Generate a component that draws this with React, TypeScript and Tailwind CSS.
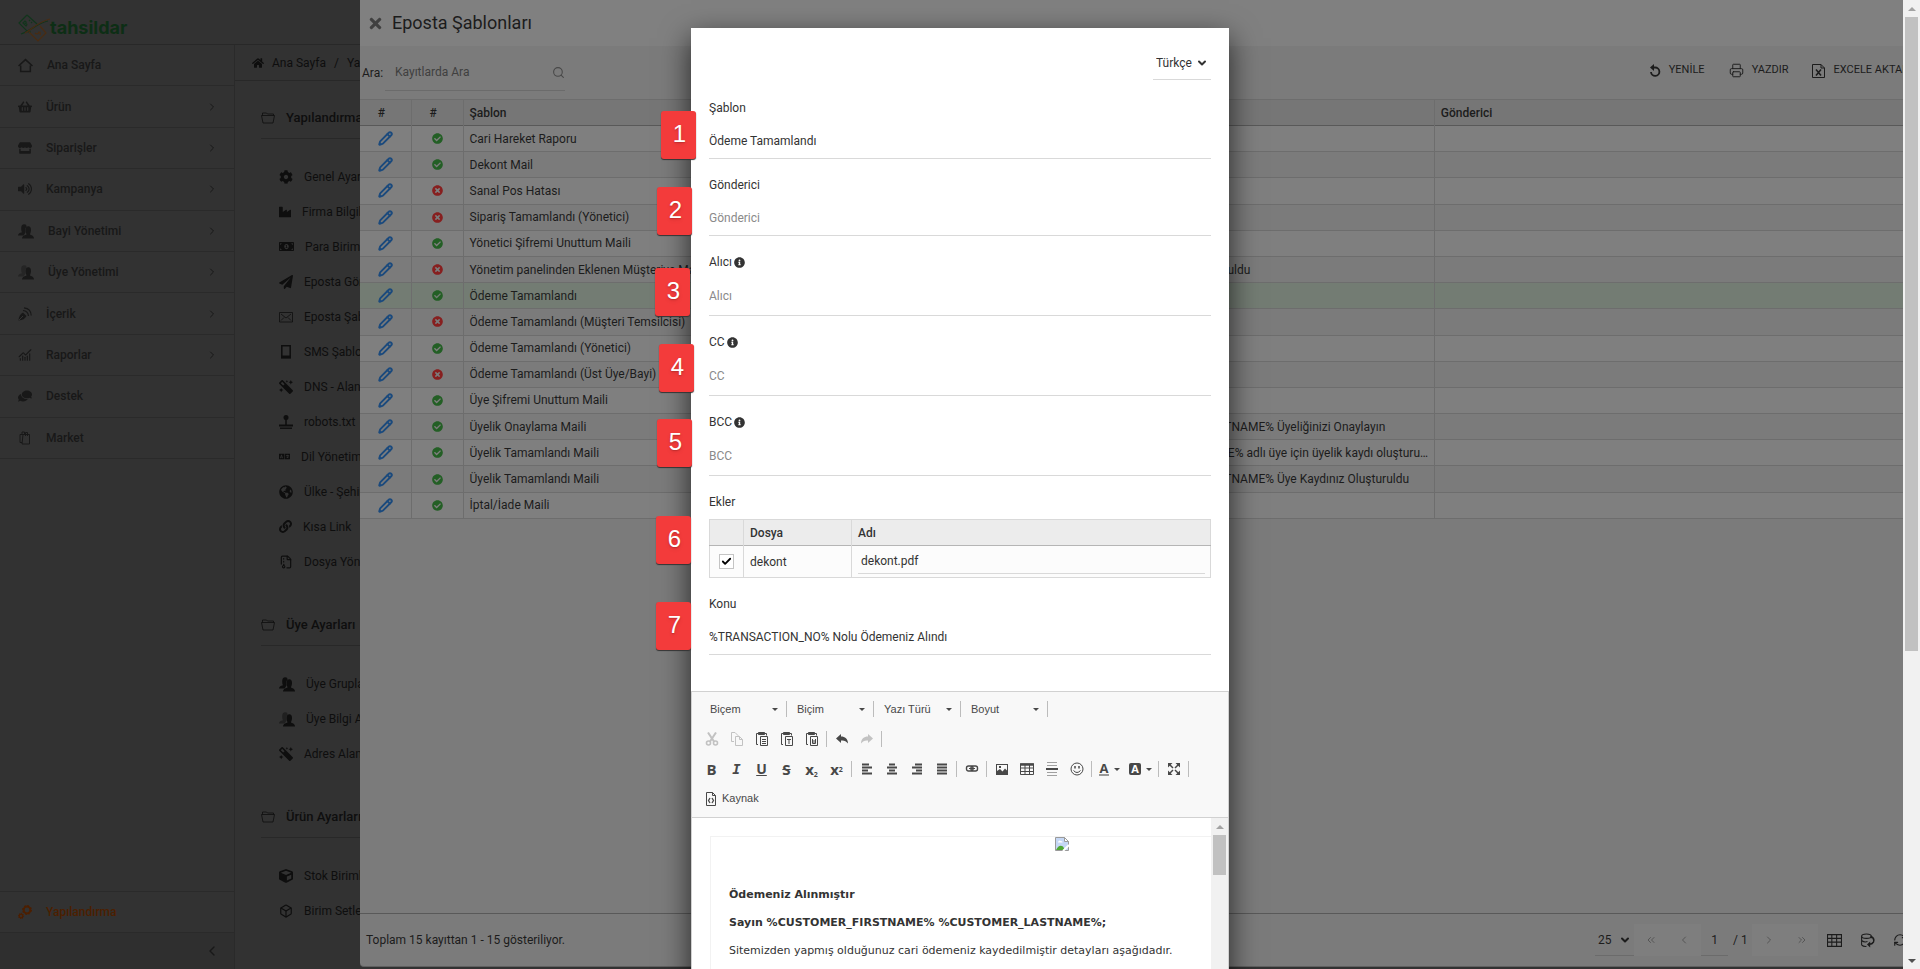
import type { ReactNode } from 'react'
import {
  FaCheckCircle,
  FaCog,
  FaComments,
  FaCube,
  FaGlobeAmericas,
  FaHome,
  FaIndustry,
  FaInfoCircle,
  FaLanguage,
  FaLink,
  FaMagic,
  FaMoneyBillAlt,
  FaPaperPlane,
  FaShoppingBasket,
  FaStore,
  FaTimes,
  FaTimesCircle,
  FaVolumeUp,
} from 'react-icons/fa'
import {
  Box,
  ChartNoAxesCombined,
  Check,
  ChevronDown,
  ChevronLeft,
  ChevronRight,
  ChevronsLeft,
  ChevronsRight,
  FileArchive,
  Pencil,
  Printer,
  RefreshCw,
  Search,
} from 'lucide-react'

const Svg = ({ children, size = 14 }: { children: ReactNode; size?: number }) => {
  return (
    <svg width={size} height={size} viewBox="0 0 14 14" fill="none" stroke="currentColor">
      {children}
    </svg>
  )
}

const HomeIcon = () => (
  <Svg size={15}>
    <path d="M0.5 7.5 L7 1.5 L13.5 7.5 M2.5 7 V12.5 H11.5 V7" strokeWidth="1.4" />
  </Svg>
)

const UsersIcon = ({ soft }: { soft?: boolean }) => (
  <Svg size={16}>
    <g fill="currentColor" stroke="none">
      <path d="M0 11 Q0 9 3.5 8.2 Q2.8 7 2.8 4.5 Q2.8 1 5.5 1 Q7.5 1 7.6 3 Q5.8 4.5 6.6 8 L5 11 Z" opacity={soft ? 0.5 : 1} />
      <path d="M3.5 13.5 Q3.5 11 7.5 10 Q6.6 8.5 6.6 6.2 Q6.6 2.8 9 2.8 Q11.4 2.8 11.4 6.2 Q11.4 8.5 10.4 10 Q14 11 14 13.5 Z" />
    </g>
  </Svg>
)

const ContentIcon = () => (
  <Svg>
    <path d="M0.5 13.5 Q1 7.5 5 5.5 L8.5 9 Q6.5 13 0.5 13.5 Z" fill="currentColor" stroke="none" />
    <path d="M5 3.5 Q10 4 10.5 9 M6 0.8 Q13 1.5 13.2 8.5" strokeWidth="1.2" />
    <path d="M1 13 L5 9" stroke="#323232" />
  </Svg>
)

const MarketIcon = () => (
  <Svg>
    <path d="M5 3.5 H11.5 V13 H4 Z M5 3.5 H2 V11.5 H4" />
    <path d="M4 3 V1 H6.5 V3 M7.5 5 V1.5 H9.5 V5" />
  </Svg>
)

const GearsIcon = () => (
  <Svg>
    <circle cx="9" cy="5" r="3.4" strokeWidth="2" />
    <circle cx="9" cy="5" r="4.5" strokeDasharray="1.8 1.7" />
    <circle cx="3" cy="11" r="1.8" strokeWidth="1.4" />
    <circle cx="3" cy="11" r="2.6" strokeDasharray="1 1" />
  </Svg>
)

const FolderIcon = () => (
  <Svg>
    <path d="M1.5 4.5 V2 H5.5 L6.5 3 H12.5 V4.5 M0.5 4.5 H13.5 L12 12 H2 Z" strokeWidth="0.8" />
  </Svg>
)

const MailIcon = () => (
  <Svg>
    <path d="M0.5 2.5 H13.5 V12 H0.5 Z M2 4 L7 8 L12 4 M2 10.5 L5 7.5 M12 10.5 L9 7.5" strokeWidth="0.8" />
  </Svg>
)

const TabletIcon = () => (
  <Svg>
    <path d="M2.8 0.8 H11.2 V12.5 H2.8 Z" strokeWidth="1.5" />
    <path d="M2 12 H12" strokeWidth="3" />
  </Svg>
)

const JoystickIcon = () => (
  <Svg>
    <circle cx="7" cy="2.5" r="2.5" fill="currentColor" stroke="none" />
    <path d="M7 4 V10" strokeWidth="1.6" />
    <path d="M0 10.5 H14" strokeWidth="2" />
    <path d="M1 13.2 H13" strokeWidth="1.4" />
  </Svg>
)

const menu = [
  { label: 'Ana Sayfa', icon: <HomeIcon />, arrow: false },
  { label: 'Ürün', icon: <FaShoppingBasket size={14} />, arrow: true },
  { label: 'Siparişler', icon: <FaStore size={14} />, arrow: true },
  { label: 'Kampanya', icon: <FaVolumeUp size={14} />, arrow: true },
  { label: 'Bayi Yönetimi', icon: <UsersIcon />, arrow: true },
  { label: 'Üye Yönetimi', icon: <UsersIcon soft />, arrow: true },
  { label: 'İçerik', icon: <ContentIcon />, arrow: true },
  { label: 'Raporlar', icon: <ChartNoAxesCombined size={14} />, arrow: true },
  { label: 'Destek', icon: <FaComments size={14} className="-scale-x-100" />, arrow: false },
  { label: 'Market', icon: <MarketIcon />, arrow: false },
]

const sections = [
  {
    title: 'Yapılandırma',
    items: [
      { label: 'Genel Ayarlar', icon: <FaCog size={14} /> },
      { label: 'Firma Bilgileri', icon: <FaIndustry size={12} /> },
      { label: 'Para Birimleri', icon: <FaMoneyBillAlt size={15} /> },
      { label: 'Eposta Gönderimi', icon: <FaPaperPlane size={14} /> },
      { label: 'Eposta Şablonları', icon: <MailIcon /> },
      { label: 'SMS Şablonları', icon: <TabletIcon /> },
      { label: 'DNS - Alan Adı', icon: <FaMagic size={14} className="-scale-x-100" /> },
      { label: 'robots.txt', icon: <JoystickIcon /> },
      { label: 'Dil Yönetimi', icon: <FaLanguage size={11} /> },
      { label: 'Ülke - Şehir', icon: <FaGlobeAmericas size={14} /> },
      { label: 'Kısa Link', icon: <FaLink size={13} /> },
      { label: 'Dosya Yönetimi', icon: <FileArchive size={14} /> },
    ],
  },
  {
    title: 'Üye Ayarları',
    items: [
      { label: 'Üye Grupları', icon: <UsersIcon /> },
      { label: 'Üye Bilgi Alanları', icon: <UsersIcon soft /> },
      { label: 'Adres Alanları', icon: <FaMagic size={14} className="-scale-x-100" /> },
    ],
  },
  {
    title: 'Ürün Ayarları',
    items: [
      { label: 'Stok Birimleri', icon: <FaCube size={14} /> },
      { label: 'Birim Setleri', icon: <Box size={14} /> },
    ],
  },
]

const templates = [
  { name: 'Cari Hareket Raporu', active: true, subject: '' },
  { name: 'Dekont Mail', active: true, subject: '' },
  { name: 'Sanal Pos Hatası', active: false, subject: '' },
  { name: 'Sipariş Tamamlandı (Yönetici)', active: false, subject: '' },
  { name: 'Yönetici Şifremi Unuttum Maili', active: true, subject: '' },
  { name: 'Yönetim panelinden Eklenen Müşteriye Mail', active: false, subject: 'Sayın %CUSTOMER_FIRSTNAME% Kaydınız Oluşturuldu' },
  { name: 'Ödeme Tamamlandı', active: true, subject: '', selected: true },
  { name: 'Ödeme Tamamlandı (Müşteri Temsilcisi)', active: false, subject: '' },
  { name: 'Ödeme Tamamlandı (Yönetici)', active: true, subject: '' },
  { name: 'Ödeme Tamamlandı (Üst Üye/Bayi)', active: false, subject: '' },
  { name: 'Üye Şifremi Unuttum Maili', active: true, subject: '' },
  { name: 'Üyelik Onaylama Maili', active: true, subject: 'Sn %CUSTOMER_FIRSTNAME% %CUSTOMER_LASTNAME% Üyeliğinizi Onaylayın' },
  { name: 'Üyelik Tamamlandı Maili', active: true, subject: '%CUSTOMERFIRSTNAME%%CUSTOMERLASTNAME% adlı üye için üyelik kaydı oluşturuldu' },
  { name: 'Üyelik Tamamlandı Maili', active: true, subject: 'Sn %CUSTOMER_FIRSTNAME% %CUSTOMER_LASTNAME% Üye Kaydınız Oluşturuldu' },
  { name: 'İptal/İade Maili', active: true, subject: '' },
]

export default function App() {
  return (
    <div className="relative h-screen overflow-hidden bg-[#323232] font-[Roboto,sans-serif] text-xs text-[#1c1c1c]">
      <Backdrop />
      <Drawer />
      <div className="absolute inset-0 flex items-start justify-center overflow-hidden pt-7">
        <TemplateForm />
      </div>
      <PageScrollbar />
    </div>
  )
}

const Backdrop = () => {
  return (
    <div className="flex h-full flex-col">
      <header className="flex h-[45px] shrink-0 items-end border-b border-[#282828] pb-0.5 pl-[18px]">
        <Logo />
      </header>
      <div className="flex min-h-0 flex-1">
        <Sidebar />
        <main className="flex-1 text-[#0e0e0e]">
          <nav className="flex h-9 items-center border-b border-[#282828] pl-[17px]">
            <FaHome size={12} />
            <a href="#" className="ml-2">Ana Sayfa</a>
            <span className="mx-2">/</span>
            <a href="#">Yapılandırma</a>
          </nav>
          <div className="flex flex-col gap-[26px] pl-[26px] pt-[17px]">
            {sections.map((section) => (
              <section key={section.title}>
                <h2 className="mb-5 flex h-[41px] items-center gap-[11px] border-b border-[#282828] text-[13px] font-medium">
                  <FolderIcon />
                  {section.title}
                </h2>
                <ul className="pl-[18px]">
                  {section.items.map((item) => (
                    <li key={item.label} className="flex h-[35px] items-center">
                      <a href="#" className="flex items-center gap-[11px]">{item.icon}{item.label}</a>
                    </li>
                  ))}
                </ul>
              </section>
            ))}
          </div>
        </main>
      </div>
    </div>
  )
}

const Logo = () => {
  return (
    <a href="#" className="flex items-center">
      <svg width="32" height="28" viewBox="0 0 32 28" fill="none" strokeWidth="1.2">
        <path d="M9 1 L19 10 M13 18 L10 18 L1 9 L9 1" stroke="#12351c" />
        <path d="M5 9 L7 7 Q9 8 7.5 9.5 Q10 10 8 12 Z M11 6 L12 7 M13 8 L14 9" stroke="#12351c" />
        <path d="M11 18 L20 27 L28 19 L22 12" stroke="#4a2c12" />
        <path d="M17 19 Q20 21 21 18 Q23 18 22 21" stroke="#4a2c12" />
        <path d="M3 20 C12 17 20 9 30 7" stroke="#12351c" />
        <path d="M7 19 C14 15 20 8 32 5" stroke="#4a2c12" />
      </svg>
      <span className="font-[Inter,sans-serif] text-lg leading-6 font-bold text-[#0d2e15]">tahsildar</span>
    </a>
  )
}

const Sidebar = () => {
  return (
    <aside className="flex w-[235px] shrink-0 flex-col border-r border-[#2a2a2a] font-medium text-[#181818]">
      <ul className="grid h-[414px] grid-rows-10">
        {menu.map((item) => (
          <li key={item.label} className="flex items-center border-b border-[#2a2a2a] pr-4 pl-[18px]">
            <a href="#" className="flex flex-1 items-center gap-3.5">{item.icon}{item.label}</a>
            {item.arrow && <ChevronRight size={12} />}
          </li>
        ))}
      </ul>
      <a href="#" className="mt-auto flex h-[42px] items-center gap-3.5 border-y border-[#2a2a2a] pl-[18px] text-[#4d1f00]">
        <GearsIcon />
        Yapılandırma
      </a>
      <button type="button" className="flex h-9 items-center justify-end bg-[#2f2f2f] pr-3.5" aria-label="Menüyü daralt">
        <ChevronLeft size={16} />
      </button>
    </aside>
  )
}

const Drawer = () => {
  return (
    <section className="absolute top-0 right-0 bottom-0.5 left-[360px] flex flex-col rounded-b border-b border-[#606060] bg-[#7b7b7b]">
      <header className="flex h-[46px] shrink-0 items-center gap-2 bg-[#808080] pl-[7px]">
        <button type="button" aria-label="Kapat" className="text-[#404040]"><FaTimes size={17} /></button>
        <h1 className="text-lg">Eposta Şablonları</h1>
      </header>
      <div className="flex h-[53px] shrink-0 items-center justify-between pr-[11px] pl-0.5">
        <div className="flex items-center">
          <label htmlFor="search" className="w-[23px]">Ara:</label>
          <div className="flex h-9 w-[180px] items-center border-b border-[#6b6b6b]">
            <input id="search" placeholder="Kayıtlarda Ara" className="w-full pl-2.5 placeholder:text-[#404040]" />
            <Search size={13} className="shrink-0 text-[#484848]" />
          </div>
        </div>
        <div className="flex gap-6 pb-1 text-[11px]">
          <button type="button" className="flex items-center gap-2"><UndoIcon />YENİLE</button>
          <button type="button" className="flex items-center gap-2"><Printer size={15} strokeWidth={1.5} />YAZDIR</button>
          <button type="button" className="flex items-center gap-2"><ExcelIcon />EXCELE AKTAR</button>
        </div>
      </div>
      <table className="h-[420px] w-full table-fixed border-collapse">
        <colgroup>
          <col className="w-[51px]" />
          <col className="w-[52px]" />
          <col />
          <col />
          <col />
        </colgroup>
        <thead>
          <tr className="h-[26px] border-t border-b border-t-[#6d6d6d] border-b-[#595959] bg-[#767676] text-left">
            <th className="border-r border-[#6d6d6d] pr-2 text-center font-medium">#</th>
            <th className="border-r border-[#6d6d6d] pr-2 text-center font-medium">#</th>
            <th className="border-r border-[#6d6d6d] px-1.5 font-medium">Şablon</th>
            <th className="border-r border-[#6d6d6d] px-1.5 font-medium">Konu</th>
            <th className="px-1.5 font-medium">Gönderici</th>
          </tr>
        </thead>
        <tbody>
          {templates.map((row, i) => (
            <tr key={i} className={row.selected ? 'h-[26px] bg-[#737c73]' : 'h-[26px] odd:bg-[#7f7f7f] even:bg-[#7b7b7b]'}>
              <td className="border-r border-b border-[#6d6d6d]">
                <button type="button" aria-label="Düzenle" className="flex w-full justify-center text-[#1b4a7d]"><Pencil size={15} strokeWidth={3} /></button>
              </td>
              <td className="border-r border-b border-[#6d6d6d]">
                <div className="flex justify-center">
                  {row.active ? <FaCheckCircle size={11} className="text-[#235f25]" /> : <FaTimesCircle size={11} className="text-[#871f1f]" />}
                </div>
              </td>
              <td className="truncate border-r border-b border-[#6d6d6d] px-1.5">{row.name}</td>
              <td className="truncate border-r border-b border-[#6d6d6d] pl-1.5 pr-1">{row.subject}</td>
              <td className="border-b border-[#6d6d6d]" />
            </tr>
          ))}
        </tbody>
      </table>
      <footer className="mt-auto flex h-[53px] items-center border-t border-[#595959] pr-[13px] pl-1.5">
        <p className="flex-1">Toplam 15 kayıttan 1 - 15 gösteriliyor.</p>
        <div className="relative flex h-8 w-[39px] items-center border-b border-[#6b6b6b]">
          <select aria-label="Sayfa boyutu" className="w-full appearance-none pl-[3px]"><option>25</option></select>
          <ChevronDown size={12} strokeWidth={4} className="pointer-events-none absolute right-[3px]" />
        </div>
        <div className="flex h-8 w-[67px] items-center justify-around bg-[#7e7e7e] text-[#555]">
          <button type="button" aria-label="İlk"><ChevronsLeft size={12} /></button>
          <button type="button" aria-label="Önceki"><ChevronLeft size={12} /></button>
        </div>
        <input aria-label="Sayfa" defaultValue="1" className="h-8 w-[27px] border-b border-[#6b6b6b] text-center" />
        <span className="w-6 pl-[5px]">/ 1</span>
        <div className="flex h-8 w-[66px] items-center justify-around bg-[#7e7e7e] text-[#555]">
          <button type="button" aria-label="Sonraki"><ChevronRight size={12} /></button>
          <button type="button" aria-label="Son"><ChevronsRight size={12} /></button>
        </div>
        <div className="flex gap-[18px] pl-[9px]">
          <button type="button" aria-label="Sütunlar">
            <Svg size={15}><path d="M0.5 1.5 H13.5 V12.5 H0.5 Z M0.5 5 H13.5 M0.5 8.5 H13.5 M4.5 1.5 V12.5 M9 1.5 V12.5" /></Svg>
          </button>
          <button type="button" aria-label="Veri">
            <Svg size={15}>
              <ellipse cx="6" cy="3" rx="4.5" ry="2" />
              <path d="M1.5 3 V11 Q3 12.8 6 12.5 M1.5 7 Q4 9 7 8 M10.5 3 V5" />
              <path d="M10 3 Q14 5 12.5 8.5 Q11.5 10.5 8.5 10.5" strokeWidth="1.4" />
              <path d="M9.5 8 V13.5 L6.5 10.7 Z" fill="currentColor" stroke="none" />
            </Svg>
          </button>
          <button type="button" aria-label="Yenile"><RefreshCw size={14} /></button>
        </div>
      </footer>
    </section>
  )
}

const UndoIcon = () => {
  return (
    <svg width="12" height="14" viewBox="0 0 12 14" fill="none" stroke="currentColor" strokeWidth="1.8">
      <path d="M4 3.5 H6 A4.2 4.2 0 1 1 2 8" />
      <path d="M5 0 V7 L1 3.5 Z" fill="currentColor" stroke="none" />
    </svg>
  )
}

const ExcelIcon = () => {
  return (
    <svg width="13" height="14" viewBox="0 0 13 14" fill="none" stroke="currentColor">
      <path d="M0.5 0.5 H9 L12.5 4 V13.5 H0.5 Z M9 0.5 V4 H12.5" />
      <path d="M4 5.5 L9 11.5 M9 5.5 L4 11.5" strokeWidth="1.5" />
    </svg>
  )
}

const Field = ({ id, label, value, placeholder, info, tall, badge }: { id: string; label: string; value?: string; placeholder?: string; info?: boolean; tall?: boolean; badge: ReactNode }) => {
  return (
    <div className="relative">
      {badge}
      <label htmlFor={id} className="flex h-5 items-center gap-0.5">
        {label}
        {info && <FaInfoCircle size={11} />}
      </label>
      <input
        id={id}
        defaultValue={value}
        placeholder={placeholder}
        className={`mt-1 block w-full border-b border-[#d9d9d9] placeholder:text-[#8a8a8a] ${tall ? 'h-10' : 'h-[37px] pt-0.5'}`}
      />
    </div>
  )
}

const Badge = ({ n, place }: { n: number; place: string }) => {
  return (
    <span className={`absolute flex h-12 w-[35px] items-center justify-center rounded-[3px] bg-[#f33b3b] pb-0.5 pl-0.5 font-['Liberation_Sans',sans-serif] text-2xl text-white shadow-[0_1px_1px_#333] text-shadow-md ${place}`}>
      {n}
    </span>
  )
}

const TemplateForm = () => {
  return (
    <form className="w-[538px] shrink-0 bg-white text-[#333] shadow-[0_10px_28px_rgba(0,0,0,0.7)]">
      <div className="flex flex-col gap-4 px-[18px] pt-[18px] pb-9">
        <div className="relative mb-0.5 flex h-[34px] w-[58px] items-center self-end border-b border-[#d9d9d9]">
          <select aria-label="Dil" className="w-full appearance-none pl-[3px]"><option>Türkçe</option></select>
          <ChevronDown size={12} strokeWidth={4} className="pointer-events-none absolute right-[3px]" />
        </div>
        <Field id="template" label="Şablon" value="Ödeme Tamamlandı" badge={<Badge n={1} place="top-[13px] -left-12" />} />
        <Field id="sender" label="Gönderici" placeholder="Gönderici" badge={<Badge n={2} place="top-3 -left-[52px]" />} />
        <Field id="to" label="Alıcı" placeholder="Alıcı" info tall badge={<Badge n={3} place="top-4 -left-[54px]" />} />
        <Field id="cc" label="CC" placeholder="CC" info tall badge={<Badge n={4} place="top-3 -left-[50px]" />} />
        <Field id="bcc" label="BCC" placeholder="BCC" info tall badge={<Badge n={5} place="top-[7px] -left-[52px]" />} />
        <div className="relative">
          <Badge n={6} place="top-6 -left-[53px]" />
          <h3 className="flex h-5 items-center">Ekler</h3>
          <table className="mt-[7px] w-full table-fixed border-collapse border border-[#d9d9d9]">
            <thead>
              <tr className="h-[26px] border-b border-[#b5b5b5] bg-[#ececec] text-left">
                <th className="w-[34px] border-r border-[#d9d9d9]" />
                <th className="w-[108px] border-r border-[#d9d9d9] px-1.5 font-medium">Dosya</th>
                <th className="px-1.5 font-medium">Adı</th>
              </tr>
            </thead>
            <tbody>
              <tr className="h-8 bg-[#fcfcfc]">
                <td className="border-r border-[#d9d9d9]">
                  <label className="relative mx-auto flex size-[15px] items-center justify-center">
                    <input type="checkbox" defaultChecked aria-label="dekont" className="size-[15px] appearance-none border border-[#c4c4c4] bg-white" />
                    <Check size={11} strokeWidth={4} className="pointer-events-none absolute text-black" />
                  </label>
                </td>
                <td className="border-r border-[#d9d9d9] px-1.5">dekont</td>
                <td className="pr-[5px] pl-1.5">
                  <input aria-label="Adı" defaultValue="dekont.pdf" className="block h-6 w-full border-b border-[#d9d9d9] pl-[3px]" />
                </td>
              </tr>
            </tbody>
          </table>
        </div>
        <Field id="subject" label="Konu" value="%TRANSACTION_NO% Nolu Ödemeniz Alındı" badge={<Badge n={7} place="top-2 -left-[53px]" />} />
      </div>
      <Editor />
    </form>
  )
}

const Tool = ({ label, faded, wide, children }: { label: string; faded?: boolean; wide?: boolean; children: ReactNode }) => {
  return (
    <button type="button" aria-label={label} className={`flex h-6 items-center justify-center gap-[5px] ${wide ? 'w-[31px]' : 'w-[25px]'} ${faded ? 'opacity-30' : ''}`}>
      {children}
    </button>
  )
}

const Sep = () => <span className="mx-0.5 h-4 w-px bg-[#bcbcbc]" />

const Caret = () => <span className="border-x-[3px] border-t-[3px] border-x-transparent border-t-[#484848]" />

const Clipboard = ({ children }: { children: ReactNode }) => {
  return (
    <Svg>
      <path d="M3 12.5 H1.5 V1.5 H3 M10 1.5 H11.5 V3.5" />
      <path d="M3.5 0.5 H9.5 V2.5 H3.5 Z" fill="currentColor" />
      <path d="M5.5 4.5 H12.5 V13.5 H5.5 Z" />
      {children}
    </Svg>
  )
}

const Editor = () => {
  return (
    <div className="border border-[#d1d1d1]">
      <div className="flex flex-col border-b border-[#d1d1d1] bg-[#f8f8f8] pt-0.5 pb-1 pl-[7px] font-['Liberation_Sans',sans-serif] text-[11px] text-[#484848]">
        <div className="flex h-[30px] items-center pl-[3px]">
          {['Biçem', 'Biçim', 'Yazı Türü', 'Boyut'].map((name) => (
            <div key={name} className="flex items-center">
              <button type="button" className="flex h-6 w-[82px] items-center justify-between pr-1.5 pl-2">
                {name}
                <Caret />
              </button>
              <Sep />
            </div>
          ))}
        </div>
        <div className="flex h-[30px] items-center">
          <Tool label="Kes" faded>
            <Svg>
              <path d="M3 0.5 L9 9.5 M11 0.5 L5 9.5" strokeWidth="2" />
              <circle cx="3.5" cy="11" r="2" strokeWidth="1.6" />
              <circle cx="10.5" cy="11" r="2" strokeWidth="1.6" />
            </Svg>
          </Tool>
          <Tool label="Kopyala" faded>
            <Svg>
              <path d="M4 9.5 H1.5 V0.5 H5 L8 3.5 V4" />
              <path d="M5.5 4.5 H9.5 L12.5 7.5 V13.5 H5.5 Z M9.5 4.5 V7.5 H12.5" />
            </Svg>
          </Tool>
          <Tool label="Yapıştır"><Clipboard><path d="M7 7.5 H11 M7 9.5 H11 M7 11.5 H11" /></Clipboard></Tool>
          <Tool label="Düz metin olarak yapıştır"><Clipboard><path d="M7 7.5 H11 M9 7.5 V12" /></Clipboard></Tool>
          <Tool label="Word'den yapıştır"><Clipboard><path d="M7.5 7 V11.5 H10.5 V7 M9 8 V11.5" /></Clipboard></Tool>
          <Sep />
          <Tool label="Geri al">
            <Svg><path d="M6 2 L1 6.5 L6 11 V8.5 C9 8 11 9 13 11.5 C13 7 10 4.5 6 4.5 Z" fill="currentColor" stroke="none" /></Svg>
          </Tool>
          <Tool label="Yinele" faded>
            <Svg><path d="M8 2 L13 6.5 L8 11 V8.5 C5 8 3 9 1 11.5 C1 7 4 4.5 8 4.5 Z" fill="currentColor" stroke="none" /></Svg>
          </Tool>
          <Sep />
        </div>
        <div className="flex h-[30px] items-center">
          <Tool label="Kalın"><b className="font-['Open_Sans',sans-serif] text-[15px]">B</b></Tool>
          <Tool label="İtalik"><b className="font-['DejaVu_Sans_Mono',monospace] text-sm italic">I</b></Tool>
          <Tool label="Altı çizili"><b className="font-['Open_Sans',sans-serif] text-sm underline">U</b></Tool>
          <Tool label="Üstü çizili"><b className="font-['Open_Sans',sans-serif] text-[15px] line-through">S</b></Tool>
          <Tool label="Alt simge"><b className="font-['Open_Sans',sans-serif] text-[15px] leading-4">x<sub className="text-[7px]">2</sub></b></Tool>
          <Tool label="Üst simge"><b className="font-['Open_Sans',sans-serif] text-[15px] leading-4">x<sup className="text-[7px]">2</sup></b></Tool>
          <Sep />
          <Tool label="Sola hizala"><Svg><path d="M2 2.5 H9 M2 5.5 H12 M2 8.5 H8 M2 11.5 H12" strokeWidth="2" /></Svg></Tool>
          <Tool label="Ortala"><Svg><path d="M4 2.5 H10 M2 5.5 H12 M4 8.5 H10 M2 11.5 H12" strokeWidth="2" /></Svg></Tool>
          <Tool label="Sağa hizala"><Svg><path d="M5 2.5 H12 M2 5.5 H12 M6 8.5 H12 M2 11.5 H12" strokeWidth="2" /></Svg></Tool>
          <Tool label="İki yana yasla"><Svg><path d="M2 2.5 H12 M2 5.5 H12 M2 8.5 H12 M2 11.5 H12" strokeWidth="2" /></Svg></Tool>
          <Sep />
          <Tool label="Bağlantı">
            <Svg>
              <rect x="1.5" y="4" width="6.5" height="5" rx="2" strokeWidth="1.4" />
              <rect x="6" y="4" width="6.5" height="5" rx="2" strokeWidth="1.4" />
              <path d="M4 6.5 H10" />
            </Svg>
          </Tool>
          <Sep />
          <Tool label="Resim">
            <Svg>
              <rect x="1.5" y="2.5" width="11" height="10" />
              <path d="M2 12 V9 L5 7 L7.5 9.5 L10 6.5 L12 8.5 V12 Z" fill="currentColor" stroke="none" />
              <rect x="4" y="4" width="2" height="2" fill="currentColor" stroke="none" />
            </Svg>
          </Tool>
          <Tool label="Tablo">
            <Svg>
              <path d="M0.5 2 H13.5 V12.5 H0.5 Z M0.5 6 H13.5 M0.5 9.5 H13.5 M5 3 V12.5 M9.5 3 V12.5" />
              <path d="M0 2.5 H14" strokeWidth="2.5" />
            </Svg>
          </Tool>
          <Tool label="Yatay çizgi">
            <Svg>
              <path d="M2 0.5 H12 M2 3.5 H12 M2 10.5 H12 M2 13.5 H12" opacity="0.5" />
              <path d="M1 7 H13" strokeWidth="2" />
            </Svg>
          </Tool>
          <Tool label="İfade">
            <Svg>
              <circle cx="7" cy="7" r="6" />
              <path d="M5 4 V6.5 M9 4 V6.5" strokeWidth="1.5" />
              <path d="M3.5 8.5 Q7 12.5 10.5 8.5" />
            </Svg>
          </Tool>
          <Sep />
          <Tool label="Yazı rengi" wide><b className="border-b-2 border-[#999] px-px font-['Open_Sans',sans-serif] text-[13px] leading-3">A</b><Caret /></Tool>
          <Tool label="Arka plan rengi" wide><b className="w-3 rounded-xs bg-[#484848] text-center font-['Open_Sans',sans-serif] leading-3 text-white">A</b><Caret /></Tool>
          <Sep />
          <Tool label="Ekranı kapla">
            <Svg>
              <path d="M1 1 H5.5 L1 5.5 Z M13 1 V5.5 L8.5 1 Z M1 13 V8.5 L5.5 13 Z M13 13 H8.5 L13 8.5 Z" fill="currentColor" stroke="none" />
              <path d="M2 2 L6 6 M12 2 L8 6 M2 12 L6 8 M12 12 L8 8" strokeWidth="1.5" />
            </Svg>
          </Tool>
          <Sep />
        </div>
        <div className="flex h-[29px] items-center">
          <button type="button" className="flex h-6 items-center gap-[3px] pl-1.5">
            <Svg>
              <path d="M1.5 0.5 H7.5 L10.5 3.5 V13.5 H1.5 Z M7.5 0.5 V3.5 H10.5" />
              <path d="M5 6 L3.5 8.5 L5 11 M7 6 L8.5 8.5 L7 11" strokeWidth="1.3" />
            </Svg>
            Kaynak
          </button>
        </div>
      </div>
      <div className="flex h-[400px]">
        <div className="flex-1 pt-[18px] pl-[18px]">
          <div className="h-full border-t border-l border-[#f2f2f2] pl-[18px] font-['DejaVu_Sans',Verdana,sans-serif] text-[11px] text-[#333]">
            <div className="flex h-12 justify-end pr-[142px]"><BrokenImage /></div>
            <p className="mb-2 leading-5 font-bold">Ödemeniz Alınmıştır</p>
            <p className="mb-2 leading-5 font-bold">Sayın %CUSTOMER_FIRSTNAME% %CUSTOMER_LASTNAME%;</p>
            <p className="leading-5">Sitemizden yapmış olduğunuz cari ödemeniz kaydedilmiştir detayları aşağıdadır.</p>
          </div>
        </div>
        <div className="flex w-[17px] flex-col items-center bg-[#f1f1f1]">
          <span className="flex h-[17px] items-center"><span className="border-x-4 border-b-4 border-x-transparent border-b-[#a3a3a3]" /></span>
          <span className="h-10 w-[13px] bg-[#c1c1c1]" />
        </div>
      </div>
    </div>
  )
}

const BrokenImage = () => {
  return (
    <svg width="14" height="14" viewBox="0 0 14 14">
      <path d="M0.5 0.5 H9.5 L13.5 4.5 V13.5 H0.5 Z" fill="#c5d7f5" stroke="#9a9a9a" />
      <path d="M9.5 0.5 V4.5 H13.5 Z" fill="#fff" stroke="#9a9a9a" />
      <path d="M3 5 Q4 2.5 6 4 Q8 4 7.5 5.5 H3 Z" fill="#fff" />
      <path d="M1 13 Q4 7 8 9.5 L10 13 Z" fill="#4fa834" />
      <path d="M8 14 L14 8" stroke="#fff" strokeWidth="2" />
    </svg>
  )
}

const PageScrollbar = () => {
  return (
    <div className="absolute inset-y-0 right-0 flex w-[17px] flex-col items-center bg-[#f1f1f1]">
      <span className="flex h-[17px] items-center"><span className="border-x-4 border-b-4 border-x-transparent border-b-[#a3a3a3]" /></span>
      <span className="h-[calc(66%-6px)] w-[13px] bg-[#c1c1c1]" />
      <span className="mt-auto flex h-[17px] items-center"><span className="border-x-4 border-t-4 border-x-transparent border-t-[#505050]" /></span>
    </div>
  )
}
